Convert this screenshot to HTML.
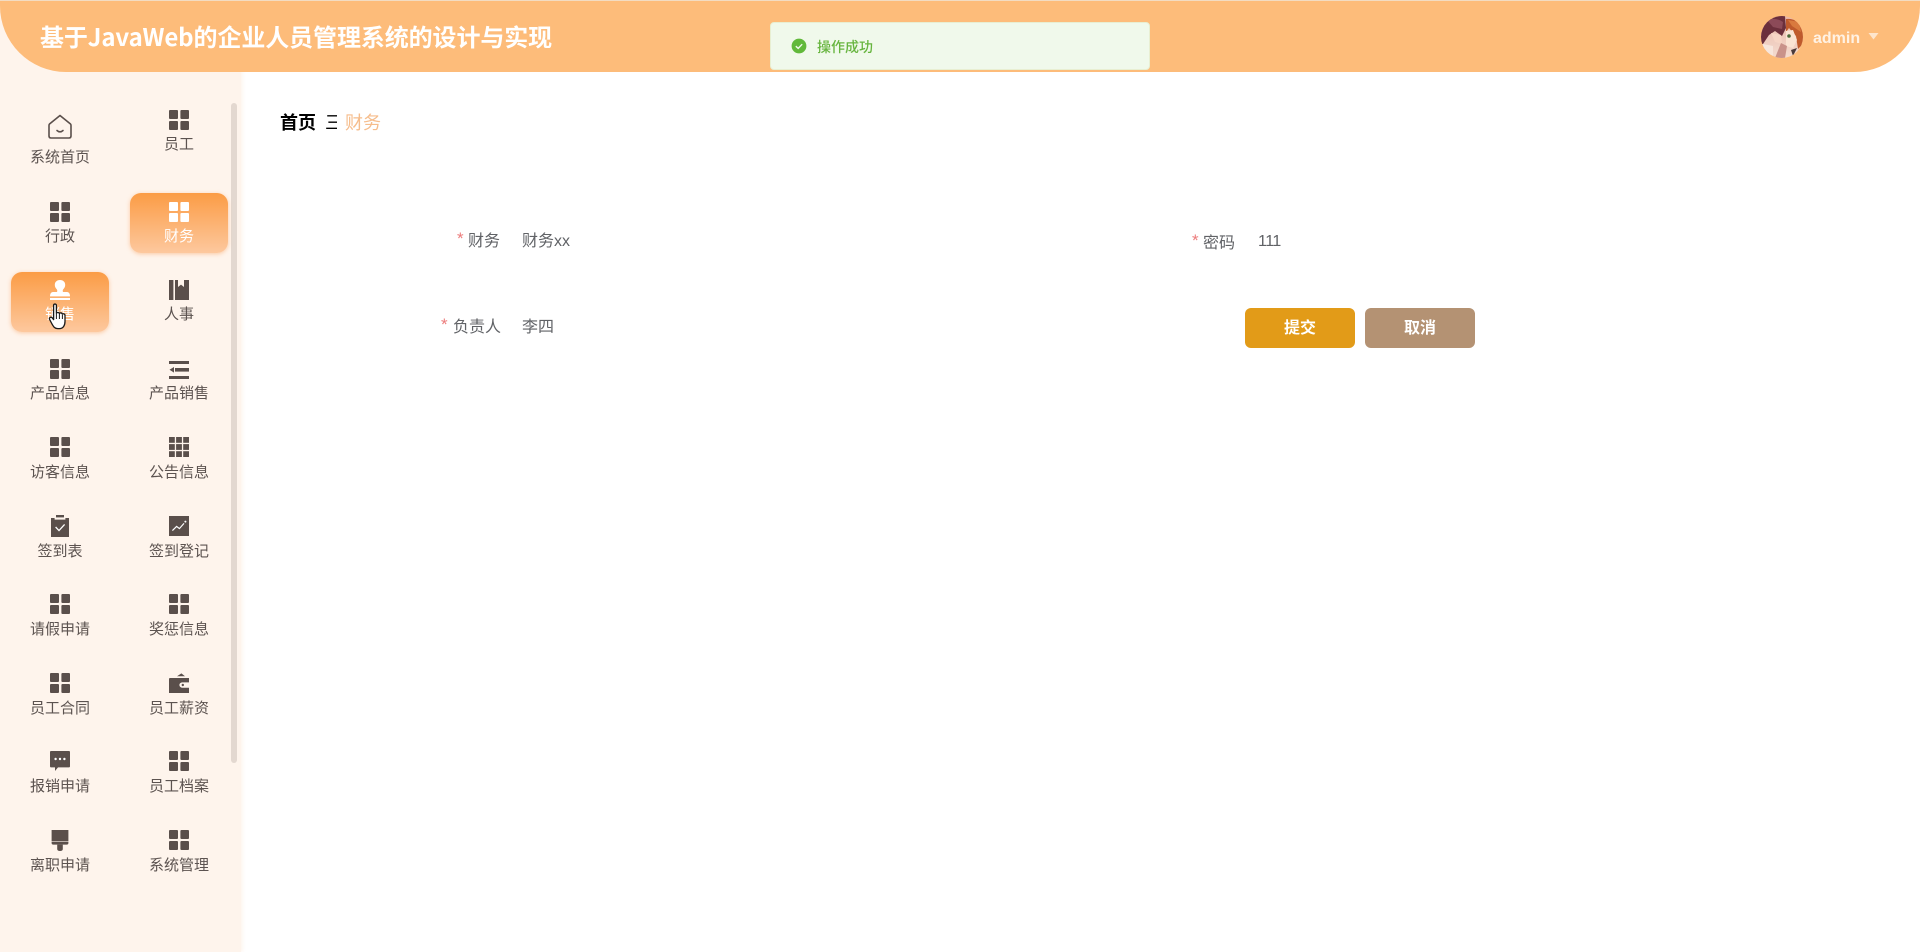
<!DOCTYPE html>
<html lang="zh">
<head>
<meta charset="utf-8">
<title>基于JavaWeb的企业人员管理系统的设计与实现</title>
<style>
*{box-sizing:border-box}
html,body{margin:0;padding:0;width:1920px;height:952px;overflow:hidden;background:#fff;font-family:"Liberation Sans","Noto Sans CJK SC",sans-serif}
.a{position:absolute}
#side{left:0;top:0;width:241px;height:952px;background:#fef4ec;box-shadow:2px 0 3px rgba(254,244,236,.8)}
#head{left:0;top:1px;width:1920px;height:71px;background:#fdbc7a;border-radius:0 0 66px 66px}
#topline{left:0;top:0;width:1920px;height:2px;background:#f3dcc2}
#title{left:40px;top:17px;height:38px;line-height:38px;font-size:24px;color:#fff;white-space:nowrap;font-family:"Noto Sans CJK SC","Liberation Sans",sans-serif;font-weight:700;letter-spacing:-.1px}
#bar{left:231px;top:103px;width:6px;height:660px;background:#e3d8d0;border-radius:3px}
.l{position:absolute;width:98px;height:20px;line-height:20px;text-align:center;font-size:15px;color:#5c5350;white-space:nowrap;margin-top:1px}
.i{position:absolute;width:20px;height:20px;fill:#5a4f4b}
.act{position:absolute;width:98px;height:60px;border-radius:11px;background:linear-gradient(180deg,#fb9c45,#fdc89e);box-shadow:0 1px 4px rgba(250,165,100,.55)}
.w{color:#fff}
.req{position:absolute;color:#ec7b7b;font-size:17px;line-height:20px}
.fl{position:absolute;font-size:16px;line-height:22px;color:#606266;white-space:nowrap;margin-top:1px}
.btn{position:absolute;top:308px;width:110px;height:40px;border-radius:6px;color:#fff;font-size:16px;font-weight:700;text-align:center;line-height:41px}
</style>
</head>
<body>
<svg width="0" height="0" style="position:absolute">
<symbol id="g" viewBox="0 0 20 20"><rect x="0" y="0" width="9" height="9" rx="1"/><rect x="11.4" y="0" width="8.6" height="9" rx="1"/><rect x="0" y="11" width="9" height="9" rx="1"/><rect x="11.4" y="11" width="8.6" height="9" rx="1"/></symbol>
</svg>

<div class="a" id="side"></div>
<div class="a" id="topline"></div>
<div class="a" id="head"></div>
<div class="a" id="title">基于JavaWeb的企业人员管理系统的设计与实现</div>

<div class="a" id="bar"></div>

<!-- active backgrounds -->
<div class="act" style="left:130px;top:193px"></div>
<div class="act" style="left:11px;top:272px"></div>

<!-- row 1 -->
<svg class="a" style="left:47px;top:114px" width="26" height="26" viewBox="0 0 26 26" fill="none" stroke="#5a4f4b" stroke-width="1.6" stroke-linejoin="round" stroke-linecap="round"><path d="M13 1.5 L2.5 10 Q2 10.6 2 11.5 V22 Q2 24 4 24 H22 Q24 24 24 22 V11.5 Q24 10.6 23.5 10 Z"/><path d="M10 16.5 Q13 19.2 16 16.5"/></svg>
<div class="l" style="left:11px;top:147px">系统首页</div>
<svg class="i" style="left:169px;top:110px"><use href="#g"/></svg>
<div class="l" style="left:130px;top:134px">员工</div>

<!-- row 2 -->
<svg class="i" style="left:50px;top:202px"><use href="#g"/></svg>
<div class="l" style="left:11px;top:226px">行政</div>
<svg class="i" style="left:169px;top:202px;fill:#fff"><use href="#g"/></svg>
<div class="l w" style="left:130px;top:226px">财务</div>

<!-- row 3 -->
<svg class="i" style="left:50px;top:280px;fill:#fff" viewBox="0 0 20 20"><path d="M10 0 C6.6 0 4.8 2.2 4.8 5 C4.8 7 5.8 8.2 6.8 9.4 C7.4 10.2 7.4 11 7 12 H3 C1 12 0 13.8 0 16.4 H20 C20 13.8 19 12 17 12 H13 C12.6 11 12.6 10.2 13.2 9.4 C14.2 8.2 15.2 7 15.2 5 C15.2 2.2 13.4 0 10 0 Z"/><rect x="0" y="18" width="20" height="2"/></svg>
<div class="l w" style="left:11px;top:304px">销售</div>
<svg class="i" style="left:169px;top:280px" viewBox="0 0 20 20"><rect x="0" y="0" width="4.4" height="20"/><path d="M6 0 H9 V7 L12 4.6 L15 7 V0 H20 V20 H6 Z"/></svg>
<div class="l" style="left:130px;top:304px">人事</div>

<!-- row 4 -->
<svg class="i" style="left:50px;top:359px"><use href="#g"/></svg>
<div class="l" style="left:11px;top:383px">产品信息</div>
<svg class="i" style="left:169px;top:360px" viewBox="0 0 20 20"><rect x="0" y="1" width="20" height="3"/><rect x="6" y="8" width="14" height="3.6"/><path d="M0.5 9.8 L5 7 V12.6 Z"/><rect x="0" y="16" width="20" height="3"/></svg>
<div class="l" style="left:130px;top:383px">产品销售</div>

<!-- row 5 -->
<svg class="i" style="left:50px;top:437px"><use href="#g"/></svg>
<div class="l" style="left:11px;top:462px">访客信息</div>
<svg class="i" style="left:169px;top:437px" viewBox="0 0 20 20"><rect x="0" y="0" width="5.8" height="5.8"/><rect x="7.1" y="0" width="5.8" height="5.8"/><rect x="14.2" y="0" width="5.8" height="5.8"/><rect x="0" y="7.1" width="5.8" height="5.8"/><rect x="7.1" y="7.1" width="5.8" height="5.8"/><rect x="14.2" y="7.1" width="5.8" height="5.8"/><rect x="0" y="14.2" width="5.8" height="5.8"/><rect x="7.1" y="14.2" width="5.8" height="5.8"/><rect x="14.2" y="14.2" width="5.8" height="5.8"/></svg>
<div class="l" style="left:130px;top:462px">公告信息</div>

<!-- row 6 -->
<svg class="a" style="left:51px;top:515px;fill:#5a4f4b" width="18" height="22" viewBox="0 0 18 22"><path d="M5 0 H13 V2.4 H5 Z"/><path d="M0 3 H3.6 V4.6 H14.4 V3 H18 V22 H0 Z"/><path d="M4.6 12 L8 15.6 L13.6 9.4" fill="none" stroke="#fff" stroke-width="1.3"/></svg>
<div class="l" style="left:11px;top:541px">签到表</div>
<svg class="i" style="left:169px;top:516px" viewBox="0 0 20 20"><rect x="0" y="0" width="20" height="20"/><path d="M3.4 14.6 L7.6 10.4 L10.4 12.6 L15 7.4" fill="none" stroke="#fff" stroke-width="1.2"/><circle cx="16.4" cy="5.6" r="1" fill="#fff"/></svg>
<div class="l" style="left:130px;top:541px">签到登记</div>

<!-- row 7 -->
<svg class="i" style="left:50px;top:594px"><use href="#g"/></svg>
<div class="l" style="left:11px;top:619px">请假申请</div>
<svg class="i" style="left:169px;top:594px"><use href="#g"/></svg>
<div class="l" style="left:130px;top:619px">奖惩信息</div>

<!-- row 8 -->
<svg class="i" style="left:50px;top:673px"><use href="#g"/></svg>
<div class="l" style="left:11px;top:698px">员工合同</div>
<svg class="i" style="left:169px;top:673px" viewBox="0 0 20 20"><path d="M8 3.2 L12.4 0.4 L16 3.2 Z"/><path d="M1 5 H20 V9.4 H13.6 C11.6 9.4 10.4 10.6 10.4 12 C10.4 13.4 11.6 14.8 13.6 14.8 H20 V20 H0 V6 Q0 5 1 5 Z"/><circle cx="13.8" cy="12" r="1.2"/></svg>
<div class="l" style="left:130px;top:698px">员工薪资</div>

<!-- row 9 -->
<svg class="i" style="left:50px;top:751px" viewBox="0 0 20 20"><path d="M1 0 H19 Q20 0 20 1 V15.4 Q20 16.4 19 16.4 H8 L5 20 V16.4 H1 Q0 16.4 0 15.4 V1 Q0 0 1 0 Z"/><circle cx="5.6" cy="8" r="1.2" fill="#fff"/><circle cx="10" cy="8" r="1.2" fill="#fff"/><circle cx="14.4" cy="8" r="1.2" fill="#fff"/></svg>
<div class="l" style="left:11px;top:776px">报销申请</div>
<svg class="i" style="left:169px;top:751px"><use href="#g"/></svg>
<div class="l" style="left:130px;top:776px">员工档案</div>

<!-- row 10 -->
<svg class="a" style="left:51px;top:830px;fill:#5a4f4b" width="18" height="21" viewBox="0 0 18 21"><rect x="0.6" y="0" width="16.8" height="11.4"/><path d="M0.6 12 H17.4 V13 Q17.4 14.6 15.6 14.6 H2.4 Q0.6 14.6 0.6 13 Z"/><path d="M6.2 14.6 H11.8 V19 Q11.8 21 9 21 Q6.2 21 6.2 19 Z"/></svg>
<div class="l" style="left:11px;top:855px">离职申请</div>
<svg class="i" style="left:169px;top:830px"><use href="#g"/></svg>
<div class="l" style="left:130px;top:855px">系统管理</div>

<!-- cursor -->
<svg class="a" style="left:48px;top:303px" width="22" height="27" viewBox="0 0 22 27"><path d="M5.6 2.4 C5.6 0.6 8.4 0.6 8.4 2.4 V10.4 C8.8 9.2 11 9.2 11.4 10.6 C11.8 9.6 14 9.6 14.4 11.2 C15 10.4 17 10.8 17 12.4 V18.4 C17 22 15.4 25.6 11.4 25.6 H9.8 C6.6 25.6 5.6 23.8 4 21 L1.6 16.4 C0.8 14.6 3 13.4 4.2 14.8 L5.6 16.6 Z" fill="#fff" stroke="#1a1a1a" stroke-width="1.3" stroke-linejoin="round"/><path d="M8.4 11 V16 M11.4 11 V16 M14.4 12 V16" stroke="#1a1a1a" stroke-width="1" fill="none"/></svg>

<!-- breadcrumb -->
<div class="a" style="left:280px;top:111px;font-size:18px;line-height:25px;font-weight:700;color:#000">首页</div>
<div class="a" style="left:325px;top:111px;width:12px;overflow:hidden;font-size:18px;line-height:25px;color:#000">三</div>
<div class="a" style="left:345px;top:111px;font-size:18px;line-height:25px;color:#f6bd8c">财务</div>

<!-- form -->
<div class="req" style="left:457px;top:229px">*</div>
<div class="fl" style="left:468px;top:230px">财务</div>
<div class="fl" style="left:522px;top:230px">财务xx</div>
<div class="req" style="left:441px;top:315px">*</div>
<div class="fl" style="left:453px;top:316px">负责人</div>
<div class="fl" style="left:522px;top:316px">李四</div>
<div class="req" style="left:1192px;top:231px">*</div>
<div class="fl" style="left:1203px;top:232px">密码</div>
<div class="fl" style="left:1258px;top:230px;font-size:16px;letter-spacing:-.5px">111</div>

<div class="btn" style="left:1245px;background:#e29b18">提交</div>
<div class="btn" style="left:1365px;background:#b49273">取消</div>

<!-- toast -->
<div class="a" style="left:770px;top:22px;width:380px;height:48px;background:#f0f9eb;border:1px solid #e8efd2;border-radius:4px"></div>
<svg class="a" style="left:791px;top:38px" width="16" height="16" viewBox="0 0 16 16"><circle cx="8" cy="8" r="7.4" fill="#61b93a"/><path d="M4.8 8.2 L7.2 10.4 L11.2 6.2" fill="none" stroke="#f0f9eb" stroke-width="1.4"/></svg>
<div class="a" style="left:817px;top:37px;font-size:14px;line-height:20px;color:#67b53f;font-weight:500">操作成功</div>

<!-- user -->
<svg class="a" style="left:1761px;top:16px" width="42" height="42" viewBox="0 0 42 42">
<defs>
<clipPath id="c"><circle cx="21" cy="21" r="21"/></clipPath>
<linearGradient id="av" x1="0" y1="0" x2="0" y2="1"><stop offset="0" stop-color="#e9b7a8"/><stop offset="1" stop-color="#f4dcd0"/></linearGradient>
</defs>
<g clip-path="url(#c)">
<rect width="42" height="42" fill="url(#av)"/>
<path d="M0 0 H24 L25 12 L21 20 L14 15 L8 19 L2 28 H0 Z" fill="#6b2f3c"/>
<path d="M6 4 Q15 1 22 6 L21 13 L12 11 Z" fill="#8c4a58"/>
<path d="M25 3 Q38 2 42 14 V28 L37 33 L35 20 L28 12 L25 16 Z" fill="#bf5a2c"/>
<path d="M27 4 L38 6 L40 16 L31 10 Z" fill="#d97a3e"/>
<path d="M10 17 L20 19 L21 28 L14 26 Z" fill="#f6d5c5"/>
<path d="M25 15 L32 14 L36 24 L32 32 L25 30 Z" fill="#fae4d4"/>
<circle cx="28" cy="20" r="1.8" fill="#4c6a3a"/>
<path d="M20 27 L26 30 L24 42 H14 Z" fill="#c9928a"/>
<path d="M2 28 L12 30 L12 42 H2 Z" fill="#f7e6dc"/>
<path d="M30 34 L36 32 L32 40 Z" fill="#4a3a3a"/>
</g>
</svg>
<div class="a" style="left:1813px;top:27px;font-size:16px;line-height:24px;font-weight:700;color:#fff2e4">admin</div>
<svg class="a" style="left:1868px;top:33px" width="11" height="7" viewBox="0 0 11 7"><path d="M0.5 0 H10.5 L5.5 6.5 Z" fill="#fee5cc"/></svg>
</body>
</html>
